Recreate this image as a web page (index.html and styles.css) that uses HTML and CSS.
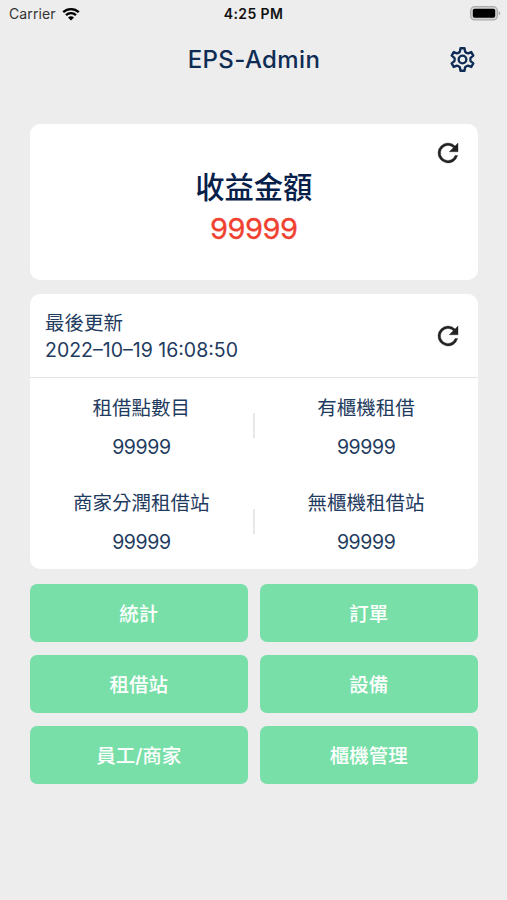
FILE: index.html
```
<!DOCTYPE html>
<html lang="zh-Hant">

<head>
  <meta charset="UTF-8">
  <meta name="viewport" content="width=device-width, initial-scale=1.0">
  <title>EPS-Admin</title>
  <link rel="stylesheet" href="styles.css">
</head>

<body>
  <div class="status-bar">
    <div class="carrier">
      <span>Carrier</span>
      <svg class="wifi" viewBox="0 0 18 14">
        <path d="M1.2 5.2a11.2 11.2 0 0 1 15.6 0M4 8.2a7.2 7.2 0 0 1 10 0" fill="none" stroke="#000" stroke-width="2.3" />
        <path d="M9 13.6l-3-3a4.3 4.3 0 0 1 6 0z" />
      </svg>
    </div>
    <div class="time">4:25 PM</div>
    <svg class="battery" viewBox="0 0 31 15">
      <rect x=".7" y=".7" width="26.6" height="13.2" rx="4" fill="#d5d5d5" stroke="#aaa" stroke-width="1.3" />
      <rect x="2.8" y="2.8" width="22.4" height="9" rx="1.8" />
      <path d="M28.7 5v4.6q1.6-.8 1.6-2.3t-1.6-2.3z" fill="#aaa" />
    </svg>
  </div>

  <header class="header">
    <h1>EPS-Admin</h1>
    <svg class="gear" viewBox="0 0 24 24">
      <path d="M9.7 5L10.2 2h3.600l.5 3Q15.400 6.300 16.900 6.500l2.900-1.100 1.800 3.200-2.400 1.900Q18.600 12 19.200 13.500l2.400 1.900-1.800 3.200-2.900-1.100Q15.400 17.700 14.300 19l-.5 3h-3.600l-.5-3Q8.600 17.700 7.100 17.500l-2.900 1.100-1.800-3.200 2.400-1.900Q5.400 12 4.800 10.500L2.400 8.600l1.800-3.200 2.900 1.100Q8.600 6.300 9.700 5z" />
      <circle cx="12" cy="12" r="3.400" />
    </svg>
  </header>

  <main class="container">
    <section class="card income">
      <svg class="refresh" viewBox="0 0 24 24">
        <path d="M17.650 6.350A7.960 7.960 0 0 0 12 4a8 8 0 1 0 7.730 10h-2.080A6 6 0 1 1 12 6c1.660 0 3.140.69 4.220 1.780L13 11h7V4z" />
      </svg>
      <h2>收益金額</h2>
      <p class="amount">99999</p>
    </section>

    <section class="card">
      <div class="update">
        <div class="update-text">
          <p>最後更新</p>
          <p>2022–10–19 16:08:50</p>
        </div>
        <svg class="refresh" viewBox="0 0 24 24">
          <path d="M17.650 6.350A7.960 7.960 0 0 0 12 4a8 8 0 1 0 7.730 10h-2.080A6 6 0 1 1 12 6c1.660 0 3.140.69 4.220 1.780L13 11h7V4z" />
        </svg>
      </div>
      <div class="stats">
        <div class="stats-row">
          <div class="stat">
            <p>租借點數目</p>
            <p class="number">99999</p>
          </div>
          <div class="divider"></div>
          <div class="stat">
            <p>有櫃機租借</p>
            <p class="number">99999</p>
          </div>
        </div>
        <div class="stats-row">
          <div class="stat">
            <p>商家分潤租借站</p>
            <p class="number">99999</p>
          </div>
          <div class="divider"></div>
          <div class="stat">
            <p>無櫃機租借站</p>
            <p class="number">99999</p>
          </div>
        </div>
      </div>
    </section>

    <nav class="menu">
      <button>統計</button>
      <button>訂單</button>
      <button>租借站</button>
      <button>設備</button>
      <button>員工/商家</button>
      <button>櫃機管理</button>
    </nav>
  </main>
</body>

</html>
```
FILE: styles.css
```
* {
  margin: 0;
  padding: 0;
  box-sizing: border-box;
}

body {
  min-height: 100vh;
  background: #ededed;
  color: #1f3b60;
  font-family: Inter, "Noto Sans CJK TC", sans-serif;
}

.status-bar {
  display: grid;
  grid-template-columns: 1fr auto 1fr;
  align-items: center;
  height: 27px;
  padding: 0 6px 0 9px;
  color: #111;
  font-size: 14px;
}

.carrier {
  display: flex;
  align-items: center;
  gap: 6px;
  color: #333;
  letter-spacing: 0.1px;
}

.wifi {
  width: 18px;
  height: 14px;
}

.time {
  margin-right: 3px;
  font-weight: 600;
  letter-spacing: 0.4px;
}

.battery {
  justify-self: end;
  width: 31px;
  height: 15px;
}

.header {
  display: grid;
  grid-template-columns: 1fr auto 1fr;
  align-items: center;
  height: 65px;
  padding: 0 31px 0 32px;
}

.header h1 {
  grid-column: 2;
  color: #0f2c55;
  font-size: 24px;
  font-weight: 500;
  letter-spacing: 0.4px;
}

.gear {
  justify-self: end;
  width: 27px;
  height: 27px;
  fill: none;
  stroke: #0f2c55;
  stroke-width: 2.1;
  stroke-linejoin: round;
}

.container {
  display: flex;
  flex-direction: column;
  gap: 14.5px;
  padding: 31.5px 29.5px 0 30px;
}

.card {
  background: #fff;
  border-radius: 10px;
}

.refresh {
  width: 30px;
  height: 30px;
  fill: #222;
  stroke: #222;
  stroke-width: 0.3;
}

.income {
  position: relative;
  height: 156px;
  padding-top: 43.5px;
  text-align: center;
}

.income .refresh {
  position: absolute;
  top: 14px;
  right: 14.5px;
}

.income h2 {
  color: #06204a;
  font-size: 29.3px;
  font-weight: 500;
  line-height: 42px;
}

.amount {
  color: #f0402f;
  font-size: 29px;
  line-height: 40px;
  letter-spacing: -0.5px;
  -webkit-text-stroke: 0.3px;
}

.update {
  display: flex;
  justify-content: space-between;
  align-items: center;
  height: 84px;
  padding: 0 14.5px 0 15px;
  border-bottom: 1.5px solid #e3e3e3;
  font-size: 19.5px;
  line-height: 27px;
}

.update-text {
  padding-top: 3px;
}

.stats-row {
  display: flex;
  align-items: center;
  height: 95.5px;
}

.stat {
  flex: 1;
  padding-top: 3.5px;
  font-size: 19.5px;
  line-height: 39px;
  text-align: center;
}

.number {
  letter-spacing: -0.4px;
}

.divider {
  width: 2px;
  height: 25px;
  background: #e8e8e8;
}

.menu {
  display: grid;
  grid-template-columns: 1fr 1fr;
  gap: 12.5px;
}

.menu button {
  height: 58.5px;
  border: none;
  border-radius: 7px;
  background: #79dfa8;
  color: #fff;
  font-family: inherit;
  font-size: 19.5px;
  font-weight: 500;
  cursor: pointer;
}
```
